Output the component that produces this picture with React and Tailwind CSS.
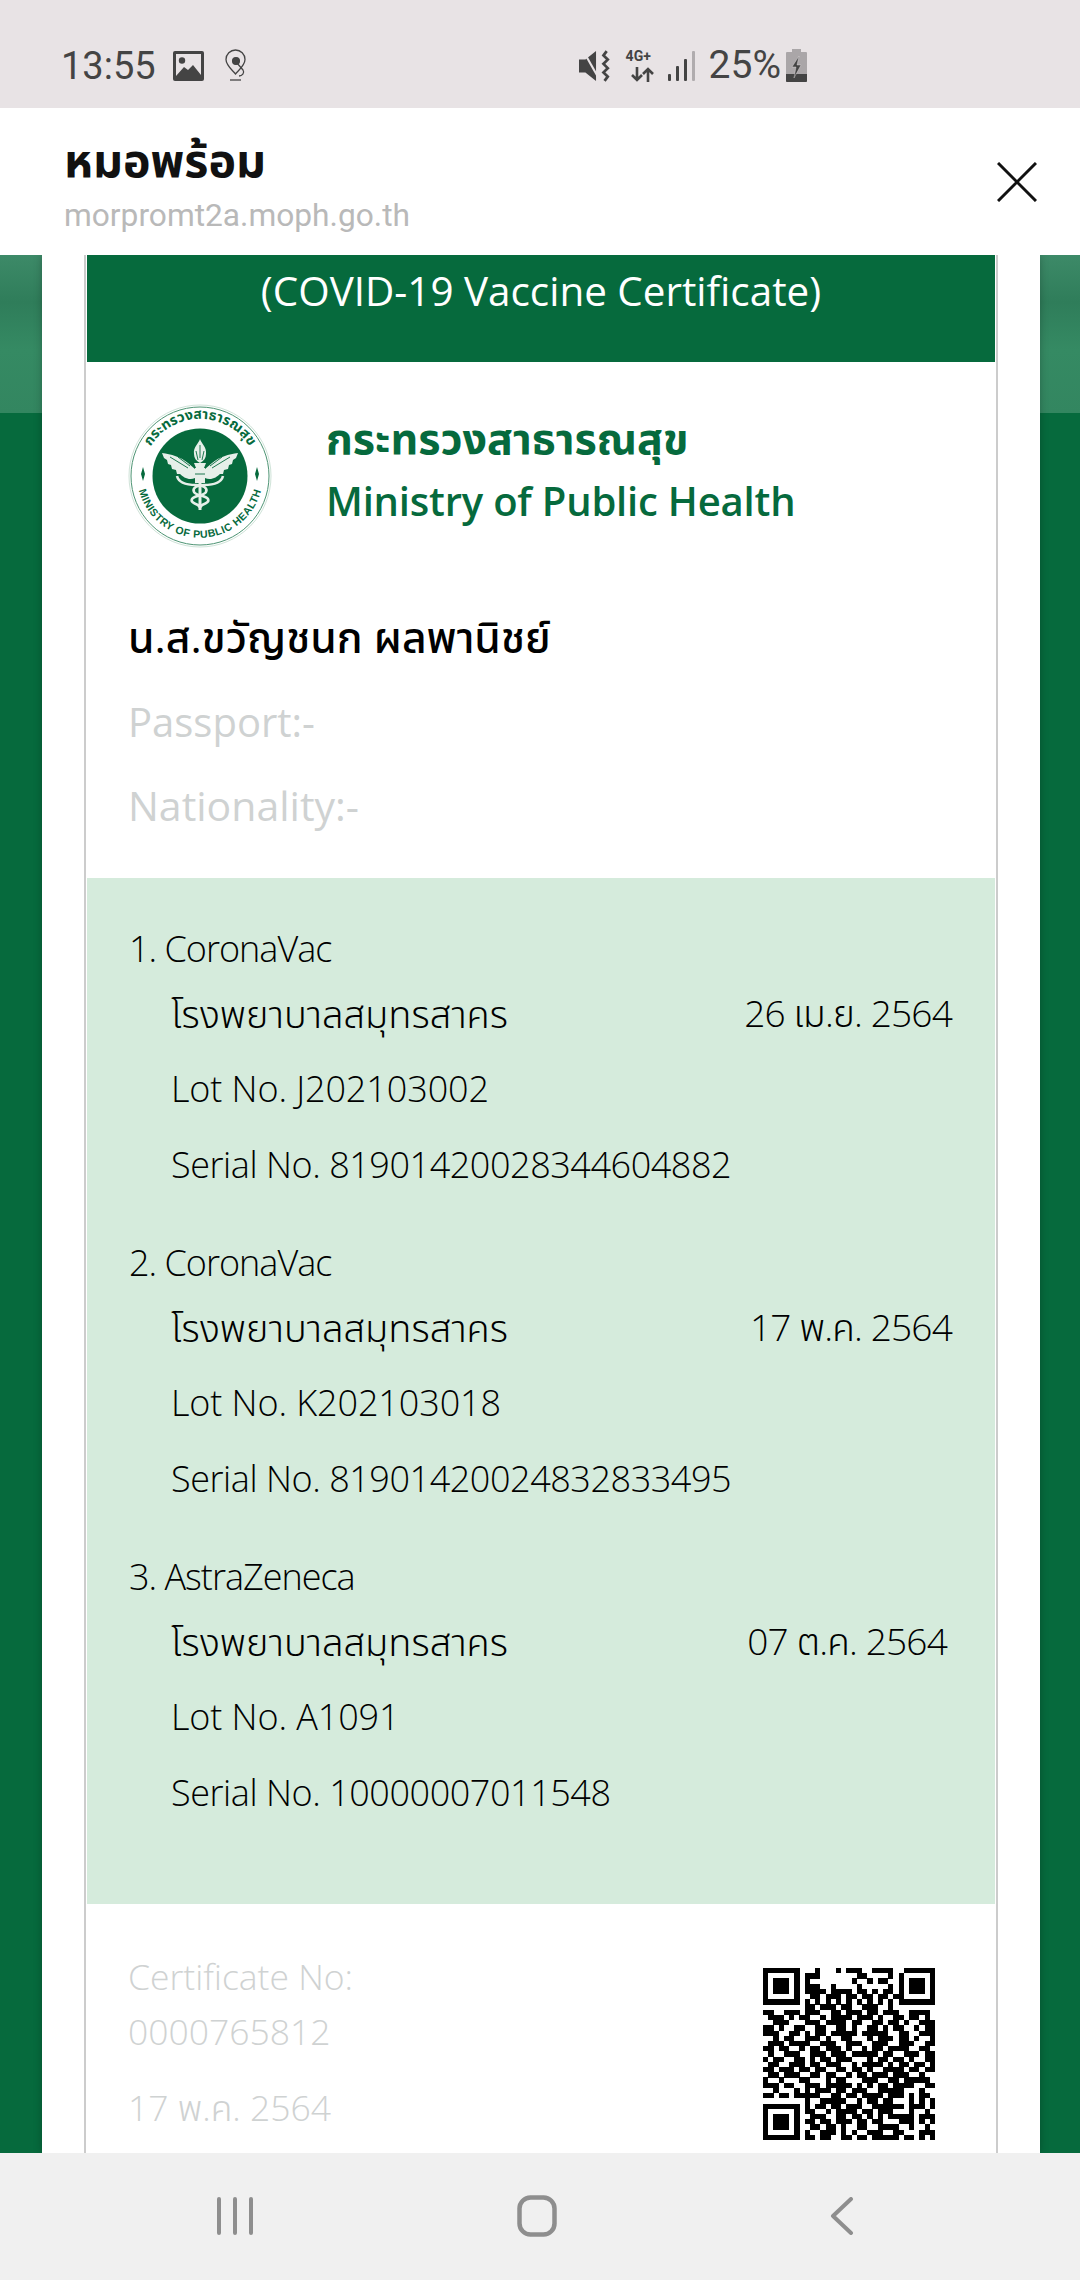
import React from 'react';

const FONT = "font-['Open_Sans','Noto_Sans_Thai','Noto_Sans',sans-serif]";

const doses = [
  { title: '1. CoronaVac', date: '26 เม.ย. 2564', lot: 'Lot No. J202103002', serial: 'Serial No. 81901420028344604882', datePad: 'pr-[43px]' },
  { title: '2. CoronaVac', date: '17 พ.ค. 2564', lot: 'Lot No. K202103018', serial: 'Serial No. 81901420024832833495', datePad: 'pr-[43px]' },
  { title: '3. AstraZeneca', date: '07 ต.ค. 2564', lot: 'Lot No. A1091', serial: 'Serial No. 10000007011548', datePad: 'pr-[48px]' },
];

// hand-read from the reference, 33 x 33 modules
const QR_ROWS = [
  '111111100010001011100111100111111',
  '100000101110000000110000100100001'.slice(0, 26) + '1000001',
  '101110101000000001001011000' .slice(0, 26) + '1011101',
  '101110101110010000100000100' .slice(0, 26) + '1011101',
  '101110101111011110110101100' .slice(0, 26) + '1011101',
  '100000100110111011011011010' .slice(0, 26) + '1000001',
  '111111101010101010101010100' .slice(0, 26) + '1111111',
  '000000001101110110011100100' .slice(0, 26) + '0000000',
  '110011101110011011101101110011110',
  '011101011001011110111010011011010',
  '001110001110111101100110110100111',
  '110100110011001101001101011001011',
  '111001101011011111011111001100111',
  '001011001110100110001011101101001',
  '011101111001110011100111001110011',
  '110110010110111010010110111100110',
  '010011100111011101111101100111011',
  '101100110101101110001011011010011',
  '011001110110111001011110101101101',
  '110111011011001101101001111011011',
  '011011100110110010110111011100100',
  '100100011000101100011100110111110',
  '111011001110111110101011011110011',
  '001000101011101101110011111000100',
  '110110111110011011011110111010110',
  '000000001001111100101101100010101',
  '111111101011011011100111111011101',
  '100000101100101111011011100010010',
  '101110100111001101101010111110111',
  '101110101101101110110110001110101',
  '101110100110110100110011110010010',
  '100000101001110101001110011000111',
  '111111101101100110110111110110101',
];

const QrCode = () => (
  <svg viewBox="0 0 33 33" className="w-[172px] h-[172px] mt-[14px]" shapeRendering="crispEdges">
    {QR_ROWS.map((row, y) =>
      row.split('').map((v, x) => (v === '1' ? <rect key={`${x}-${y}`} x={x} y={y} width="1.02" height="1.02" fill="#000" /> : null))
    )}
  </svg>
);

const WING = 'M34 49C43 50 53 53 60 59L67 65L67 74C61 77 55 73 52 70L49 70L48 66L44 65L43 61L40 60L39 56L36 54Z';

const MophLogo = () => (
  <svg viewBox="0 0 144 144" className="w-[144px] h-[144px] shrink-0">
    <defs>
      <path id="logoTop" d="M 16 88 A 58 58 0 1 1 128 88" />
      <path id="logoBottom" d="M 10 82 A 63 63 0 0 0 134 82" />
    </defs>
    <circle cx="72" cy="72" r="71" fill="#fff" stroke="#cfe3d8" strokeWidth="1" />
    <circle cx="72" cy="72" r="69" fill="none" stroke="#4d9473" strokeWidth="1" />
    <circle cx="72" cy="72" r="47.5" fill="#066a3d" />
    <text fontFamily="'Noto Sans Thai','Noto Sans',sans-serif" fontSize="14" fontWeight="700" fill="#066a3d">
      <textPath href="#logoTop" startOffset="50%" textAnchor="middle">กระทรวงสาธารณสุข</textPath>
    </text>
    <text fontFamily="'Liberation Sans',sans-serif" fontSize="10.5" fontWeight="700" fill="#066a3d" letterSpacing="0.5">
      <textPath href="#logoBottom" startOffset="50%" textAnchor="middle">MINISTRY OF PUBLIC HEALTH</textPath>
    </text>
    <path d="M15 77l-2-7 2-7 2 7z M129 77l-2-7 2-7 2 7z" fill="#066a3d" />
    {/* caduceus */}
    <g fill="#e6efe9">
      <path d="M72 35c-1 4-7 8-6 15 0 4 2 7 6 9 4-2 6-5 6-9 1-7-5-11-6-15z" />
      <path d="M66 59h12l-2 5h-8z" />
      <rect x="67" y="64" width="10" height="15" />
      <rect x="70.500" y="79" width="3" height="27" />
      <path d={WING} />
      <path d={WING} transform="matrix(-1 0 0 1 144 0)" />
    </g>
    <g fill="none" stroke="#e6efe9" strokeWidth="2.600">
      <path d="M49 72c2 8 11 9 19 9 7 0 12 3 10 7-2 4-11 3-14 7-2 4 5 5 10 8" />
      <path d="M95 72c-2 8-11 9-19 9-7 0-12 3-10 7 2 4 11 3 14 7 2 4-5 5-10 8" />
    </g>
    <g stroke="#066a3d" strokeWidth="0.900" fill="none">
      <path d="M42 53l18 11M50 53l12 9M102 53l-18 11M94 53l-12 9M72 41v13M68 47l2 9M76 47l-2 9M67 70h10" />
    </g>
  </svg>
);

const StatusLeftIcons = () => (
  <>
    <svg viewBox="0 0 31 30" className="w-[31px] h-[30px] ml-[17px]">
      <rect width="31" height="30" rx="2" fill="#444" />
      <rect x="3" y="3" width="25" height="24" fill="#e8e3e5" />
      <circle cx="9" cy="9.500" r="3.200" fill="#444" />
      <path d="M3 25l8-9 4 3 5-5 8 10v3H3z" fill="#444" />
    </svg>
    <svg viewBox="0 0 23 33" className="w-[23px] h-[33px] ml-[20px]" fill="none" stroke="#444" strokeWidth="1.300">
      <path d="M11.500 25C7 20 2 16 2 10.500a9.500 9.500 0 0 1 19 0c0 5.500-5 9.500-9.500 14.500z" />
      <circle cx="12" cy="12" r="3.400" fill="#444" />
      <path d="M13 14l6 7c2 3-1 6-4 6" />
      <path d="M6 31h11" />
    </svg>
  </>
);

const StatusRightIcons = () => (
  <>
    <svg viewBox="0 0 31 30" className="w-[33px] h-[32px]">
      <path d="M0 9h6l10-8v28l-10-8H0z" fill="#444" />
      <path d="M4 1l16 28" stroke="#e8e3e5" strokeWidth="2" />
      <path d="M26 1l-3 4 4 4-4 4 4 4-4 4 4 4-3 4" fill="none" stroke="#444" strokeWidth="2.600" />
    </svg>
    <div className="relative w-[32px] h-[33px] ml-[14px]">
      <span className="absolute top-0 left-0 text-[14px] leading-[15px] font-bold text-[#444] font-['Roboto',sans-serif]">4G+</span>
      <svg viewBox="0 0 24 15" className="absolute left-[4px] bottom-0 w-[24px] h-[15px]" fill="none" stroke="#444" strokeWidth="2.600">
        <path d="M7 0v13M2 8l5 5 5-5" />
        <path d="M18 15V2M13 7l5-5 5 5" />
      </svg>
    </div>
    <svg viewBox="0 0 27 30" className="w-[27px] h-[30px] ml-[10px]">
      <rect x="0" y="23" width="3" height="7" rx="1" fill="#444" />
      <rect x="8" y="15" width="3" height="15" rx="1" fill="#444" />
      <rect x="16" y="8" width="3" height="22" rx="1" fill="#444" />
      <rect x="24" y="0" width="3" height="30" rx="1" fill="#b0acae" />
    </svg>
    <span className="ml-[14px] text-[39px] leading-none text-[#444] font-['Roboto',sans-serif]">25%</span>
    <svg viewBox="0 0 21 33" className="w-[21px] h-[33px] ml-[5px]">
      <path d="M6 0h9v3h5a1 1 0 0 1 1 1v28a1 1 0 0 1-1 1H1a1 1 0 0 1-1-1V4a1 1 0 0 1 1-1h5z" fill="#aaa6a8" />
      <path d="M0 25h21v7a1 1 0 0 1-1 1H1a1 1 0 0 1-1-1z" fill="#444" />
      <path d="M13 7l-7 11h4l-2 11 7-13h-4l2-9z" fill="#444" stroke="#e8e3e5" strokeWidth="0.400" />
    </svg>
  </>
);

const DoseBlock = ({ dose }) => (
  <div className="flex flex-col font-light">
    <div className="h-[52px] flex items-center pl-[42px] text-[36px] tracking-[-1px]">{dose.title}</div>
    <div className={`h-[76px] flex items-center justify-between pl-[84px] ${dose.datePad}`}>
      <span className="text-[38px]">โรงพยาบาลสมุทรสาคร</span>
      <span className="text-[37px] tracking-[-0.8px]">{dose.date}</span>
    </div>
    <div className="h-[76px] flex items-center pl-[84px] text-[36px] tracking-[-0.1px]">{dose.lot}</div>
    <div className="h-[76px] flex items-center pl-[84px] text-[36px] tracking-[-0.45px]">{dose.serial}</div>
  </div>
);

export default function App() {
  return (
    <div className={`w-[1080px] h-[2280px] flex flex-col overflow-hidden bg-white ${FONT}`}>
      {/* status bar */}
      <div className="h-[108px] shrink-0 bg-[#e8e3e5] flex items-center justify-between pl-[61px] pr-[273px] pt-[23px]">
        <div className="flex items-center">
          <span className="text-[38px] leading-none text-[#444] font-['Roboto',sans-serif]">13:55</span>
          <StatusLeftIcons />
        </div>
        <div className="flex items-center">
          <StatusRightIcons />
        </div>
      </div>

      {/* browser header */}
      <div className="h-[147px] shrink-0 bg-white flex items-center justify-between pl-[64px] pr-[43px]">
        <div className="flex flex-col pt-[6px]">
          <span className="text-[46.500px] leading-[56px] font-bold text-[#111]">หมอพร้อม</span>
          <span className="text-[31.700px] leading-[44px] mt-[7px] text-[#b9b9b9] font-['Roboto',sans-serif]">morpromt2a.moph.go.th</span>
        </div>
        <svg viewBox="0 0 40 40" className="w-[40px] h-[40px] mt-[1px]" fill="none" stroke="#111" strokeWidth="3">
          <path d="M1 1l38 38M39 1L1 39" />
        </svg>
      </div>

      {/* page */}
      <div className="flex-1 min-h-0 overflow-hidden bg-[#066a3d] bg-[linear-gradient(180deg,#3d8a68_0%,#2f7d5a_30%,#358a63_60%,#338660_100%)] bg-no-repeat bg-[size:100%_158px] pl-[42px] pr-[40px]">
        <div className="bg-white px-[42px] h-full shadow-[0_0_8px_rgba(0,0,0,0.25)]">
          <div className="h-full border-x-2 border-[#cccccc] px-px flex flex-col">
            <div className="h-[107px] shrink-0 bg-[#066a3d] text-white text-center text-[40.400px] leading-[72px]">
              (COVID-19 Vaccine Certificate)
            </div>

            <div className="h-[516px] shrink-0 flex flex-col pl-[41px]">
              <div className="flex items-center mt-[42px]">
                <MophLogo />
                <div className="flex flex-col ml-[54px] pb-[15px]">
                  <span className="text-[43px] leading-[63px] font-bold text-[#066a3d]">กระทรวงสาธารณสุข</span>
                  <span className="text-[40px] leading-[63px] font-semibold text-[#066a3d] tracking-[-0.2px]">Ministry of Public Health</span>
                </div>
              </div>
              <div className="mt-[59px] text-[42.700px] leading-[60px] font-medium text-black">น.ส.ขวัญชนก ผลพานิชย์</div>
              <div className="mt-[25px] text-[40px] leading-[60px] text-[#cfd2d2]">Passport:-</div>
              <div className="mt-[23px] text-[41px] leading-[60px] text-[#cfd2d2]">Nationality:-</div>
            </div>

            <div className="h-[1026px] shrink-0 bg-[#d5ebdc] text-black pt-[45px] flex flex-col gap-[34px]">
              {doses.map((d) => (
                <DoseBlock key={d.title} dose={d} />
              ))}
            </div>

            <div className="flex-1 min-h-0 flex justify-between pl-[41px] pr-[60px] pt-[50px]">
              <div className="flex flex-col text-[35.500px] text-[#cfd2d2] font-light -mt-[1px]">
                <span className="leading-[46px]">Certificate No:</span>
                <span className="leading-[56px] mt-[4px]">0000765812</span>
                <span className="leading-[56px] mt-[20px]">17 พ.ค. 2564</span>
              </div>
              <QrCode />
            </div>
          </div>
        </div>
      </div>

      {/* android nav */}
      <div className="h-[127px] shrink-0 bg-[#f0f0f0] flex items-center">
        <div className="w-full flex items-center justify-between pl-[215px] pr-[226px] -mt-[1px]">
          <svg viewBox="0 0 40 38" className="w-[40px] h-[38px]" stroke="#8e8e8e" strokeWidth="4" strokeLinecap="round">
            <path d="M4 2v34M20 2v34M36 2v34" />
          </svg>
          <svg viewBox="0 0 40 42" className="w-[40px] h-[42px] mr-[12px]" fill="none" stroke="#8e8e8e" strokeWidth="4.500">
            <rect x="2.500" y="2.500" width="35" height="37" rx="11" />
          </svg>
          <svg viewBox="0 0 24 38" className="w-[24px] h-[38px]" fill="none" stroke="#8e8e8e" strokeWidth="4" strokeLinecap="round" strokeLinejoin="round">
            <path d="M21 2L3 19l18 17" />
          </svg>
        </div>
      </div>
    </div>
  );
}
